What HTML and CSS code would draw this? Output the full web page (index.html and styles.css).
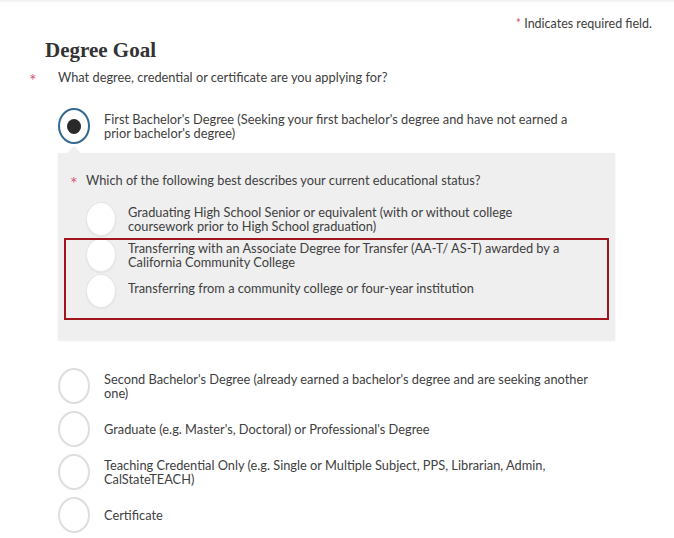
FILE: index.html
```html
<!DOCTYPE html>
<html lang="en">
<head>
<meta charset="utf-8">
<title>Degree Goal</title>
<link rel="stylesheet" href="styles.css">
</head>
<body>
<div class="page">
  <p class="req-note"><span class="star">*</span> Indicates required field.</p>
  <h1 class="title">Degree Goal</h1>
  <p class="question"><span class="star q-star">*</span>What degree, credential or certificate are you applying for?</p>
  <div class="options">
    <div class="option">
      <span class="radio checked"></span>
      <span class="label">First Bachelor's Degree (Seeking your first bachelor's degree and have not earned a<br>prior bachelor's degree)</span>
    </div>
    <div class="panel">
      <p class="sub-question"><span class="star sq-star">*</span>Which of the following best describes your current educational status?</p>
      <div class="sub-options">
        <div class="sub-option">
          <span class="radio sub"></span>
          <span class="label">Graduating High School Senior or equivalent (with or without college<br>coursework prior to High School graduation)</span>
        </div>
        <div class="sub-option">
          <span class="radio sub"></span>
          <span class="label">Transferring with an Associate Degree for Transfer (AA-T/ AS-T) awarded by a<br>California Community College</span>
        </div>
        <div class="sub-option">
          <span class="radio sub"></span>
          <span class="label">Transferring from a community college or four-year institution</span>
        </div>
      </div>
      <div class="highlight"></div>
    </div>
    <div class="option after-panel">
      <span class="radio"></span>
      <span class="label">Second Bachelor's Degree (already earned a bachelor's degree and are seeking another<br>one)</span>
    </div>
    <div class="option">
      <span class="radio"></span>
      <span class="label">Graduate (e.g. Master's, Doctoral) or Professional's Degree</span>
    </div>
    <div class="option">
      <span class="radio"></span>
      <span class="label">Teaching Credential Only (e.g. Single or Multiple Subject, PPS, Librarian, Admin,<br>CalStateTEACH)</span>
    </div>
    <div class="option">
      <span class="radio"></span>
      <span class="label">Certificate</span>
    </div>
  </div>
</div>
</body>
</html>
```
FILE: styles.css
```css
html, body {
  margin: 0;
  background: #ffffff;
}
body {
  font-family: "Lato", sans-serif;
  font-size: 12.8px;
  color: #404040;
}
.page {
  border-top: 2px solid #f3f3f3;
}
.star {
  color: #d65a80;
}
.req-note {
  margin: 0;
  padding: 15px 22px 0 0;
  text-align: right;
  font-size: 12.5px;
  line-height: 14px;
}
.title {
  margin: 6px 0 0;
  padding-left: 45px;
  font-family: "Liberation Serif", serif;
  font-weight: bold;
  font-size: 21px;
  line-height: 26px;
  color: #333333;
}
.question {
  margin: 6px 0 0;
  padding-left: 29px;
  display: flex;
  line-height: 16px;
}
.q-star,
.sq-star {
  height: 16px;
  font-size: 18px;
  line-height: 23px;
  overflow: visible;
}
.q-star {
  width: 29px;
}
.sq-star {
  width: 16px;
}
.options {
  padding: 0 59px 0 58px;
}
.option {
  display: flex;
  align-items: center;
  gap: 14px;
  min-height: 36px;
  margin-top: 7px;
}
.options > .option:first-child {
  margin-top: 23px;
}
.option.after-panel {
  margin-top: 28px;
}
.label {
  line-height: 14px;
}
.radio {
  flex: none;
  box-sizing: border-box;
  width: 32px;
  height: 36px;
  border-radius: 50%;
  border: 2px solid #dedede;
  background: #ffffff;
  display: flex;
  align-items: center;
  justify-content: center;
}
.radio.checked {
  border-color: #33698f;
}
.radio.checked::after {
  content: "";
  width: 14px;
  height: 15px;
  border-radius: 50%;
  background: #2a2a2a;
}
.panel {
  position: relative;
  margin-top: 9px;
  background: #efefef;
  padding: 19px 0 32px 12px;
  box-shadow: 0 1px 2px rgba(0, 0, 0, 0.08);
}
.panel::before {
  content: "";
  position: absolute;
  left: 9px;
  top: -7px;
  border-left: 7px solid transparent;
  border-right: 7px solid transparent;
  border-bottom: 7px solid #efefef;
}
.sub-question {
  margin: 0;
  display: flex;
  line-height: 16px;
}
.sub-options {
  margin-top: 14px;
  padding-left: 16px;
  display: flex;
  flex-direction: column;
  gap: 2px;
}
.sub-option {
  display: flex;
  align-items: center;
  gap: 12px;
  min-height: 34px;
}
.sub-option:last-child .label {
  margin-top: -7px;
}
.radio.sub {
  width: 30px;
  height: 34px;
  border: 1px solid #e6e6e6;
  box-shadow: 0 1px 2px rgba(0, 0, 0, 0.06);
}
.highlight {
  position: absolute;
  left: 6px;
  top: 85px;
  width: 545px;
  height: 82px;
  box-sizing: border-box;
  border: 2px solid #a0141c;
  pointer-events: none;
}
```
